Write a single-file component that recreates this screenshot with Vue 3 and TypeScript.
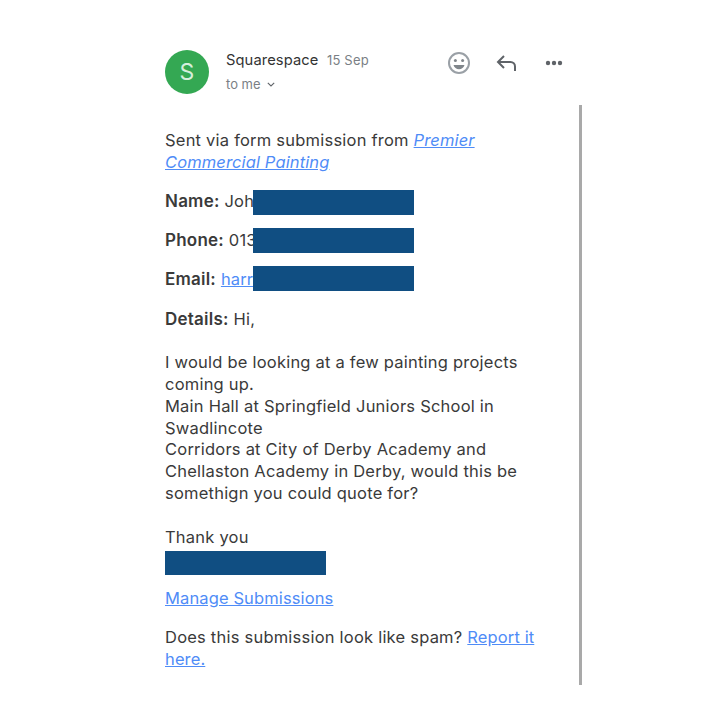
<script setup lang="ts">
const actions = ['smile', 'reply', 'more']
</script>

<template>
  <div class="page">
    <div class="mail">
      <header class="head">
        <div class="avatar">S</div>
        <div class="who">
          <div class="from">
            <span class="sender">Squarespace</span>
            <span class="date">15 Sep</span>
          </div>
          <div class="to">
            to me
            <svg class="chev" width="8" height="5" viewBox="0 0 8 5">
              <path d="M.8.8 4 4l3.2-3.2" fill="none" stroke="#5f6368" stroke-width="1.1" />
            </svg>
          </div>
        </div>
        <div class="actions">
          <template v-for="a in actions" :key="a">
            <svg v-if="a === 'smile'" width="24" height="24" viewBox="0 0 24 24">
              <circle cx="12" cy="12" r="10" fill="none" stroke="#9aa0a6" stroke-width="2" />
              <circle cx="8.4" cy="9.6" r="1.5" fill="#80868b" />
              <circle cx="15.6" cy="9.6" r="1.5" fill="#80868b" />
              <path d="M6.500 14h11c-.6 2.600-2.900 4.200-5.500 4.200S7.100 16.600 6.500 14z" fill="#80868b" />
            </svg>
            <svg v-else-if="a === 'reply'" class="reply" width="21" height="18" viewBox="0 0 21 18">
              <path d="M8 2 2 8l6 6M2 8h12.500c2.500 0 4.500 2 4.500 4.500V17" fill="none" stroke="#5f6368" stroke-width="2" />
            </svg>
            <svg v-else width="18" height="6" viewBox="0 0 18 6">
              <circle cx="3" cy="3" r="2.200" fill="#5f6368" />
              <circle cx="9" cy="3" r="2.200" fill="#5f6368" />
              <circle cx="15" cy="3" r="2.200" fill="#5f6368" />
            </svg>
          </template>
        </div>
      </header>

      <div class="scroller">
        <div class="content">
          <p>Sent via form submission from <a class="em">Premier Commercial Painting</a></p>
          <p class="field"><b>Name:</b> John<span class="redact r-name"></span></p>
          <p class="field"><b>Phone:</b> 0133<span class="redact r-phone"></span></p>
          <p class="field"><b>Email:</b> <a>harry</a><span class="redact r-email"></span></p>
          <div>
            <p>
              <b>Details:</b> Hi,<br /><br />
              I would be looking at a few painting projects coming up.<br />
              Main Hall at Springfield Juniors School in Swadlincote<br />
              Corridors at City of Derby Academy and Chellaston Academy in Derby, would this be somethign you could quote for?<br /><br />
              Thank you
            </p>
            <div class="sign"></div>
          </div>
          <p><a>Manage Submissions</a></p>
          <p>Does this submission look like spam? <a>Report it here.</a></p>
        </div>
        <div class="bar"></div>
      </div>
    </div>
  </div>
</template>

<style>
html,
body {
  margin: 0;
  background: #fff;
}
</style>

<style scoped>
.page {
  width: 720px;
  height: 720px;
  box-sizing: border-box;
  padding: 50px 0 0 165px;
  font-family: Inter, "Liberation Sans", sans-serif;
  color: #3a3a3a;
  overflow: hidden;
}

.mail {
  width: 418px;
}

.head {
  display: flex;
  align-items: flex-start;
}

.avatar {
  width: 44px;
  height: 44px;
  border-radius: 50%;
  background: #34a853;
  color: #d5eedc;
  font-size: 23px;
  line-height: 44px;
  text-align: center;
}

.who {
  margin-left: 17px;
  width: 221px;
}

.from {
  display: flex;
  align-items: baseline;
  gap: 8.500px;
  line-height: 20px;
}

.sender {
  font-size: 14.700px;
  letter-spacing: 0.1px;
  color: #333;
}

.date {
  font-size: 13px;
  letter-spacing: 0.2px;
  color: #7a7f85;
}

.to {
  display: flex;
  align-items: center;
  gap: 6px;
  margin-top: 5px;
  font-size: 13px;
  line-height: 18px;
  color: #7a7f85;
}

.actions {
  display: flex;
  align-items: center;
  width: 116px;
  height: 26px;
  justify-content: space-between;
}

.reply {
  margin-left: -3px;
}

.scroller {
  display: flex;
  margin-top: 11px;
  height: 580px;
}

.content {
  width: 372px;
  padding-top: 25px;
  display: flex;
  flex-direction: column;
  gap: 17.400px;
  font-size: 16.500px;
  line-height: 21.800px;
  letter-spacing: 0.22px;
}

.content p {
  margin: 0;
}

.content a {
  color: #4f8cf7;
  text-decoration: underline;
  letter-spacing: 0.12px;
}

.content a.em {
  font-style: italic;
}

.content b {
  font-size: 17px;
  font-weight: 600;
}

.field {
  position: relative;
}

.redact {
  position: absolute;
  left: 88px;
  width: 161px;
  height: 25px;
  background: #104e82;
}

.r-name {
  top: -1px;
}

.r-phone {
  top: -2px;
}

.r-email {
  top: -3px;
}

.sign {
  width: 161px;
  height: 24.500px;
  margin-top: 2.600px;
  margin-bottom: -5px;
  background: #104e82;
}

.bar {
  width: 3px;
  height: 580px;
  margin-left: 42px;
  background: #a9a9a9;
}
</style>
